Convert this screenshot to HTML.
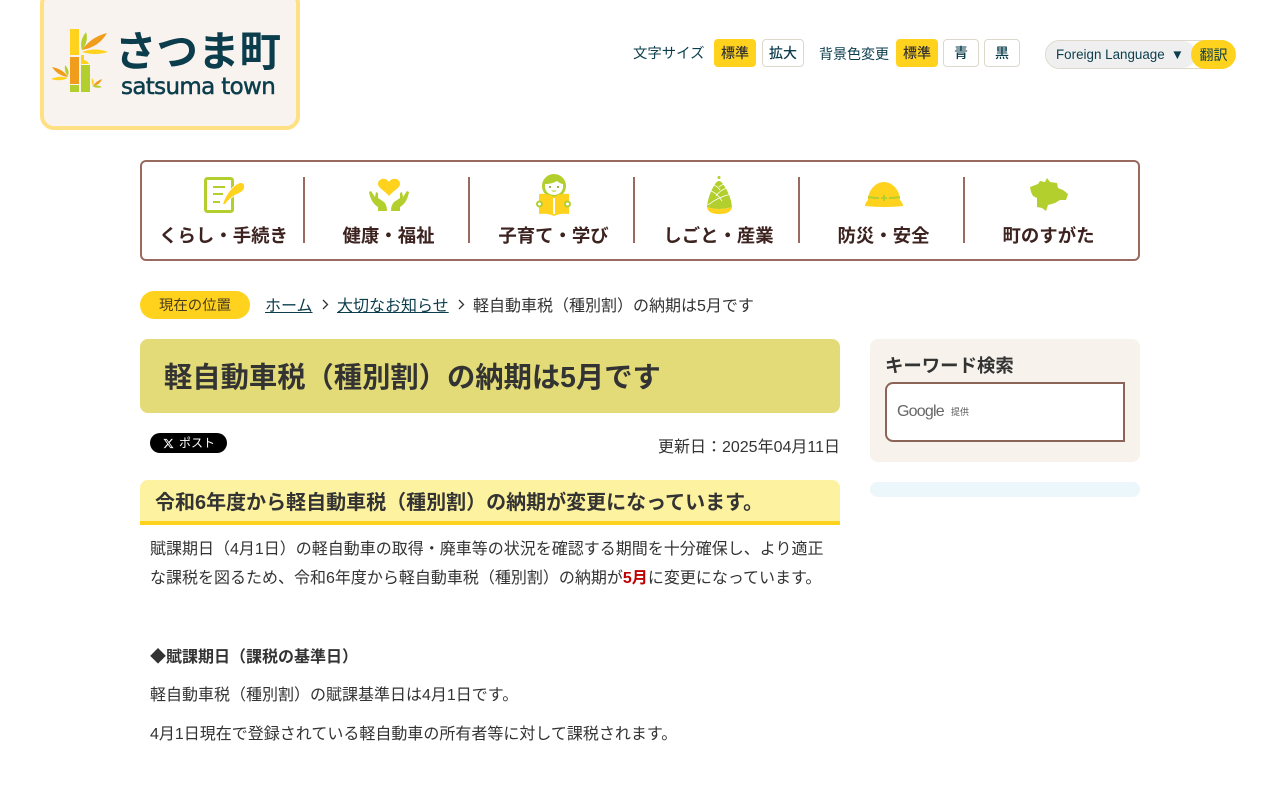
<!DOCTYPE html>
<html lang="ja"><head><meta charset="utf-8"><title>軽自動車税（種別割）の納期は5月です</title>
<style>
html,body{margin:0;padding:0;background:#fff;width:1280px;height:800px;overflow:hidden}
body{font-family:"Liberation Sans","Noto Sans CJK JP",sans-serif;color:#333;position:relative;font-size:16px}
.a{position:absolute;white-space:nowrap}
.btn{position:absolute;box-sizing:border-box;top:39px;height:28px;border:1px solid #ddd8cc;border-radius:4px;font-size:14px;line-height:26px;text-align:center;color:#0b3d4c;background:#fff;font-weight:500}
.on{background:#ffd21e;border-color:#ffd21e;color:#333}
.sep{position:absolute;top:177px;width:2px;height:66px;background:#996a60}
.nl{position:absolute;top:223px;width:165px;text-align:center;font-size:18.4px;font-weight:bold;line-height:26px;color:#3c2320;white-space:nowrap}
svg{position:absolute;overflow:visible}
</style></head><body>

<div class="a" style="left:40px;top:-10px;width:260px;height:140px;box-sizing:border-box;background:#f8f3ee;border:4px solid #ffe082;border-radius:14px"></div>
<div class="a" style="left:115px;top:27px;font-size:41.5px;font-weight:bold;line-height:50px;color:#0b3d4c">さつま町</div>
<div class="a" style="left:121px;top:72px;font-size:23px;line-height:30px;color:#0b3d4c;font-family:'DejaVu Sans',sans-serif;letter-spacing:-.65px;-webkit-text-stroke:.5px #0b3d4c">satsuma town</div>

<div class="a" style="left:633px;top:44px;font-size:14.4px;line-height:20px;color:#0b3d4c">文字サイズ</div>
<div class="btn on" style="left:714px;width:42px">標準</div>
<div class="btn" style="left:762px;width:42px">拡大</div>
<div class="a" style="left:819px;top:44px;font-size:14px;line-height:20px;color:#0b3d4c">背景色変更</div>
<div class="btn on" style="left:896px;width:42px">標準</div>
<div class="btn" style="left:943px;width:36px">青</div>
<div class="btn" style="left:984px;width:36px">黒</div>
<div class="a" style="left:1045px;top:40px;width:190px;height:29px;box-sizing:border-box;border:1px solid #ddd8cc;border-radius:15px;background:#fff"></div>
<div class="a" style="left:1046px;top:41px;width:150px;height:27px;border-radius:14px;background:#efefef"></div>
<div class="a" style="left:1056px;top:45px;font-size:13.4px;line-height:19px;color:#0b3d4c">Foreign Language<span style="margin-left:6px">▼</span></div>
<div class="a" style="left:1191px;top:40px;width:45px;height:29px;border-radius:15px;background:#ffd21e;text-align:center;font-size:14px;line-height:30px;color:#0b3d4c">翻訳</div>

<div class="a" style="left:140px;top:160px;width:1000px;height:101px;box-sizing:border-box;border:2px solid #996a60;border-radius:6px"></div>
<div class="sep" style="left:303px"></div><div class="sep" style="left:468px"></div><div class="sep" style="left:633px"></div><div class="sep" style="left:798px"></div><div class="sep" style="left:963px"></div>
<div class="nl" style="left:141px">くらし・手続き</div>
<div class="nl" style="left:306px">健康・福祉</div>
<div class="nl" style="left:471px">子育て・学び</div>
<div class="nl" style="left:636px">しごと・産業</div>
<div class="nl" style="left:801px">防災・安全</div>
<div class="nl" style="left:966px">町のすがた</div>

<svg style="left:0;top:0" width="1280" height="800" viewBox="0 0 1280 800">
<!-- bamboo logo -->
<rect x="70" y="29" width="9" height="26" fill="#ffd21e"/>
<rect x="70" y="57" width="9" height="27" fill="#f09c1c"/>
<rect x="70" y="85" width="9" height="7" fill="#b3cf2d"/>
<path d="M81 55h3v5q4 1 5 4h-8z" fill="#ffd21e"/>
<rect x="81" y="65" width="9" height="27" fill="#b3cf2d"/>
<path d="M86 32 Q89 41 82 50 Q79 41 86 32z" fill="#b3cf2d"/>
<path d="M82 50 Q91 37 107 33 Q99 47 82 50z" fill="#f09c1c"/>
<path d="M82 52 Q95 47 108 52 Q95 56 82 52z" fill="#ffd21e"/>
<path d="M52 67 Q63 69 68 77 Q58 76 52 67z" fill="#f09c1c"/>
<path d="M65 65 Q70 70 68 76 Q64 72 65 65z" fill="#b3cf2d"/>
<path d="M51 79 Q60 75 68 78 Q60 82 51 79z" fill="#ffd21e"/>
<path d="M92 78 Q95 82 93 86 Q91 82 92 78z" fill="#ffd21e"/>
<path d="M93 86 Q96 81 102 79 Q100 85 93 86z" fill="#f09c1c"/>
<path d="M92 86 Q97 84 102 87 Q97 89 92 86z" fill="#b3cf2d"/>
<!-- note -->
<rect x="205.500" y="178.500" width="27" height="33" rx="2" fill="none" stroke="#b3cf2d" stroke-width="3"/>
<path d="M213 187h12M213 194h10M213 202h7" stroke="#b3cf2d" stroke-width="2" fill="none"/>
<path d="M223 204 Q227 192 236 185 Q242 181 244 185 Q245 190 239 193 Q231 196 225 204z" fill="#ffd21e" stroke="#fff" stroke-width="1.500" paint-order="stroke"/>
<!-- hands and heart -->
<path d="M389 196 C385 191 378 188 378 184 C378 178 386 177 389 182 C392 177 400 178 400 184 C400 188 393 191 389 196z" fill="#ffd21e"/>
<path d="M369 192 L371 191 L375 197 L376 192 L378 193 L378 198 L384 202 Q387 205 387 211 H378 V207 Q371 203 369 192z" fill="#b3cf2d"/>
<path d="M409 192 L407 191 L403 197 L402 192 L400 193 L400 198 L394 202 Q391 205 391 211 H400 V207 Q407 203 409 192z" fill="#b3cf2d"/>
<!-- child with book -->
<circle cx="554" cy="186" r="12" fill="#b3cf2d"/>
<path d="M545 184 Q552 184 557 181 Q561 184 563 184 Q564 194 554 195 Q544 194 545 184z" fill="#fff"/>
<circle cx="550" cy="187" r="1" fill="#7a9a20"/><circle cx="558" cy="187" r="1" fill="#7a9a20"/>
<path d="M551 190.500 Q554 193 557 190.500z" fill="#b3cf2d"/>
<path d="M539 194 Q548 193 554 197 Q560 193 569 194 V214 Q560 213 554 216 Q548 213 539 214z" fill="#ffd21e"/>
<rect x="553" y="198" width="2" height="16" fill="#fff"/>
<circle cx="539.500" cy="204" r="2.500" fill="#fff" stroke="#b3cf2d" stroke-width="2"/>
<circle cx="567.500" cy="204" r="2.500" fill="#fff" stroke="#b3cf2d" stroke-width="2"/>
<!-- shoot -->
<circle cx="719" cy="177.500" r="1.500" fill="#b3cf2d"/>
<path d="M715 184 Q719 178 723 184 Q731 195 732 207 Q719 211 707 207 Q708 195 715 184z" fill="#b3cf2d"/>
<path d="M707 207 Q719 211 732 207 Q731 214 719 214 Q708 214 707 207z" fill="#ffd21e"/>
<path d="M708 205 Q718 197 731 194 M711 191 Q717 193 722 201 M727 188 Q720 190 716 196 M714 185 Q717 186 720 190 M724 184 Q721 185 719 187" stroke="#fff" stroke-width=".8" fill="none"/>
<!-- helmet -->
<path d="M868 200 C868 190 876 182 884 182 C892 182 900 190 900 200 Q903 203 903 206 Q884 208 865 206 Q865 203 868 200z" fill="#ffd21e"/>
<path d="M868 197 Q873 198 879 198 M889 198 Q895 198 900 197 M881 198H887 M884 195V201" stroke="#b3cf2d" stroke-width="2" fill="none"/>
<!-- map -->
<path d="M1030 187L1038 184L1040 181L1045 182L1047 178L1050 182L1057 183L1058 188L1063 190L1068 194L1066 200L1060 200L1055 203L1048 205L1046 211L1042 208L1037 207L1037 198L1033 196L1031 192z" fill="#b3cf2d"/>
<!-- breadcrumb chevrons -->
<path d="M323 300l4.500 4.500L323 309" fill="none" stroke="#333" stroke-width="1.300"/>
<path d="M459 300l4.500 4.500L459 309" fill="none" stroke="#333" stroke-width="1.300"/>
</svg>

<div class="a" style="left:140px;top:291px;width:110px;height:28px;border-radius:14px;background:#ffd21e;text-align:center;font-size:14.4px;line-height:30px;color:#4a3b20">現在の位置</div>
<div class="a" style="left:265px;top:296px;font-size:16px;line-height:21px;color:#0b3d4c;text-decoration:underline">ホーム</div>
<div class="a" style="left:337px;top:296px;font-size:16px;line-height:21px;color:#0b3d4c;text-decoration:underline">大切なお知らせ</div>
<div class="a" style="left:473px;top:296px;font-size:16px;line-height:21px">軽自動車税（種別割）の納期は5月です</div>

<div class="a" style="left:140px;top:339px;width:700px;height:74px;background:#e3db78;border-radius:8px"></div>
<div class="a" style="left:164px;top:358px;font-size:28.3px;font-weight:bold;line-height:38px;color:#333">軽自動車税（種別割）の納期は5月です</div>

<div class="a" style="left:150px;top:433px;width:77px;height:20px;background:#000;border-radius:10px"></div>
<svg style="left:163px;top:438px" width="11" height="11" viewBox="0 0 24 24"><path d="M18.200 2h3.400l-7.400 8.500L23 22h-6.800l-5.300-7-6.100 7H1.400l7.900-9.100L1 2h7l4.800 6.400zm-1.200 18h1.900L7 3.900H5z" fill="#fff"/></svg>
<div class="a" style="left:179px;top:435px;font-size:12px;line-height:16px;color:#fff">ポスト</div>
<div class="a" style="right:440px;top:437px;font-size:16px;line-height:22px">更新日：2025年04月11日</div>

<div class="a" style="left:140px;top:480px;width:700px;height:45px;box-sizing:border-box;background:#fdf29f;border-bottom:4px solid #ffd21e;border-radius:8px 8px 0 0"></div>
<div class="a" style="left:155px;top:490px;font-size:20px;font-weight:bold;line-height:27px;color:#333">令和6年度から軽自動車税（種別割）の納期が変更になっています。</div>

<div class="a" style="left:150px;top:540px;font-size:16px;line-height:19px">賦課期日（4月1日）の軽自動車の取得・廃車等の状況を確認する期間を十分確保し、より適正</div>
<div class="a" style="left:150px;top:569px;font-size:16px;line-height:19px">な課税を図るため、令和6年度から軽自動車税（種別割）の納期が<b style="color:#c00000">5月</b>に変更になっています。</div>
<div class="a" style="left:150px;top:648px;font-size:16px;line-height:19px;font-weight:bold">◆賦課期日（課税の基準日）</div>
<div class="a" style="left:150px;top:686px;font-size:16px;line-height:19px">軽自動車税（種別割）の賦課基準日は4月1日です。</div>
<div class="a" style="left:150px;top:725px;font-size:16px;line-height:19px">4月1日現在で登録されている軽自動車の所有者等に対して課税されます。</div>

<div class="a" style="left:870px;top:339px;width:270px;height:123px;background:#f7f3ec;border-radius:8px"></div>
<div class="a" style="left:885px;top:354px;font-size:18.4px;font-weight:bold;line-height:24px;color:#333">キーワード検索</div>
<div class="a" style="left:885px;top:382px;width:240px;height:60px;box-sizing:border-box;background:#fff;border:2px solid #8b6558;border-radius:8px 0 0 8px"></div>
<div class="a" style="left:897px;top:402px;font-size:16px;line-height:20px;color:#666;letter-spacing:-.8px">Google</div>
<div class="a" style="left:951px;top:405px;font-size:9px;line-height:14px;color:#555">提供</div>
<div class="a" style="left:870px;top:482px;width:270px;height:15px;background:#ebf7fb;border-radius:8px"></div>
</body></html>
